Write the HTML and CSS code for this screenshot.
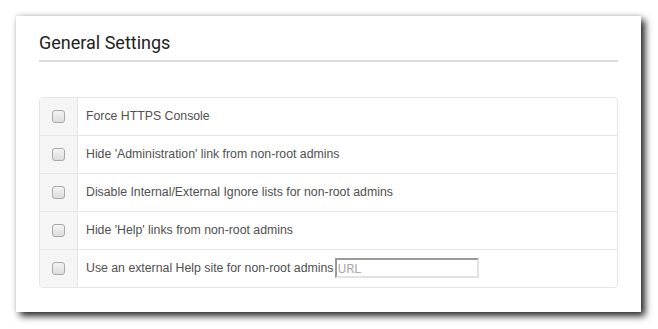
FILE: index.html
```html
<!DOCTYPE html>
<html lang="en">

<head>
  <meta charset="UTF-8" />
  <title>General Settings</title>
  <link rel="stylesheet" href="styles.css">
</head>

<body>
  <div class="panel">
    <h2 class="panel-title">General Settings</h2>

    <div class="settings">
      <div class="row">
        <div class="check"><input type="checkbox" /></div>
        <div class="label">Force HTTPS Console</div>
      </div>
      <div class="row">
        <div class="check"><input type="checkbox" /></div>
        <div class="label">Hide 'Administration' link from non-root admins</div>
      </div>
      <div class="row">
        <div class="check"><input type="checkbox" /></div>
        <div class="label">Disable Internal/External Ignore lists for non-root admins</div>
      </div>
      <div class="row">
        <div class="check"><input type="checkbox" /></div>
        <div class="label">Hide 'Help' links from non-root admins</div>
      </div>
      <div class="row">
        <div class="check"><input type="checkbox" /></div>
        <div class="label">Use an external Help site for non-root admins <input class="url" type="text" placeholder="URL" /></div>
      </div>
    </div>
  </div>
</body>

</html>
```

FILE: styles.css
```css
* {
  margin: 0;
  padding: 0;
  box-sizing: border-box;
}

body {
  background: #fff;
  padding: 16px 17px 17px 16px;
  font-family: "Liberation Sans", Arial, sans-serif;
}

.panel {
  width: 625px;
  height: 296px;
  background: #fff;
  padding: 16px 23px 0 23px;
  box-shadow: 4px 4px 7px rgba(0, 0, 0, 0.85), 0 -1px 5px rgba(0, 0, 0, 0.12);
}

.panel-title {
  font-family: Roboto, sans-serif;
  font-size: 18px;
  font-weight: 400;
  line-height: 21px;
  color: #222;
  padding-bottom: 7px;
  border-bottom: 2px solid #dcdcdc;
}

.settings {
  margin-top: 35px;
  border: 1px solid #e6e6e6;
  border-radius: 4px;
  overflow: hidden;
}

.row {
  display: flex;
  height: 38px;
  border-top: 1px solid #e6e6e6;
}

.row:first-child {
  height: 37px;
  border-top: none;
}

.check {
  width: 38px;
  background: #f5f5f5;
  border-right: 1px solid #e6e6e6;
  display: flex;
  align-items: center;
  justify-content: center;
}

.check input {
  appearance: none;
  width: 13px;
  height: 13px;
  border: 1px solid #a9a9a9;
  border-radius: 3px;
  background: linear-gradient(#f4f4f4, #dcdcdc);
}

.label {
  display: flex;
  align-items: center;
  padding-left: 8px;
  padding-bottom: 1px;
  font-size: 12.3px;
  color: #505050;
  white-space: pre;
}

.url {
  width: 144px;
  height: 20px;
  margin-left: -2px;
  border: 2px solid;
  border-color: #9a9a9a #e2e2e2 #e2e2e2 #9a9a9a;
  padding: 0 1px;
  font-family: Roboto, sans-serif;
  font-size: 13px;
  color: #555;
  outline: none;
}

.url::placeholder {
  color: #aaa;
}
```
